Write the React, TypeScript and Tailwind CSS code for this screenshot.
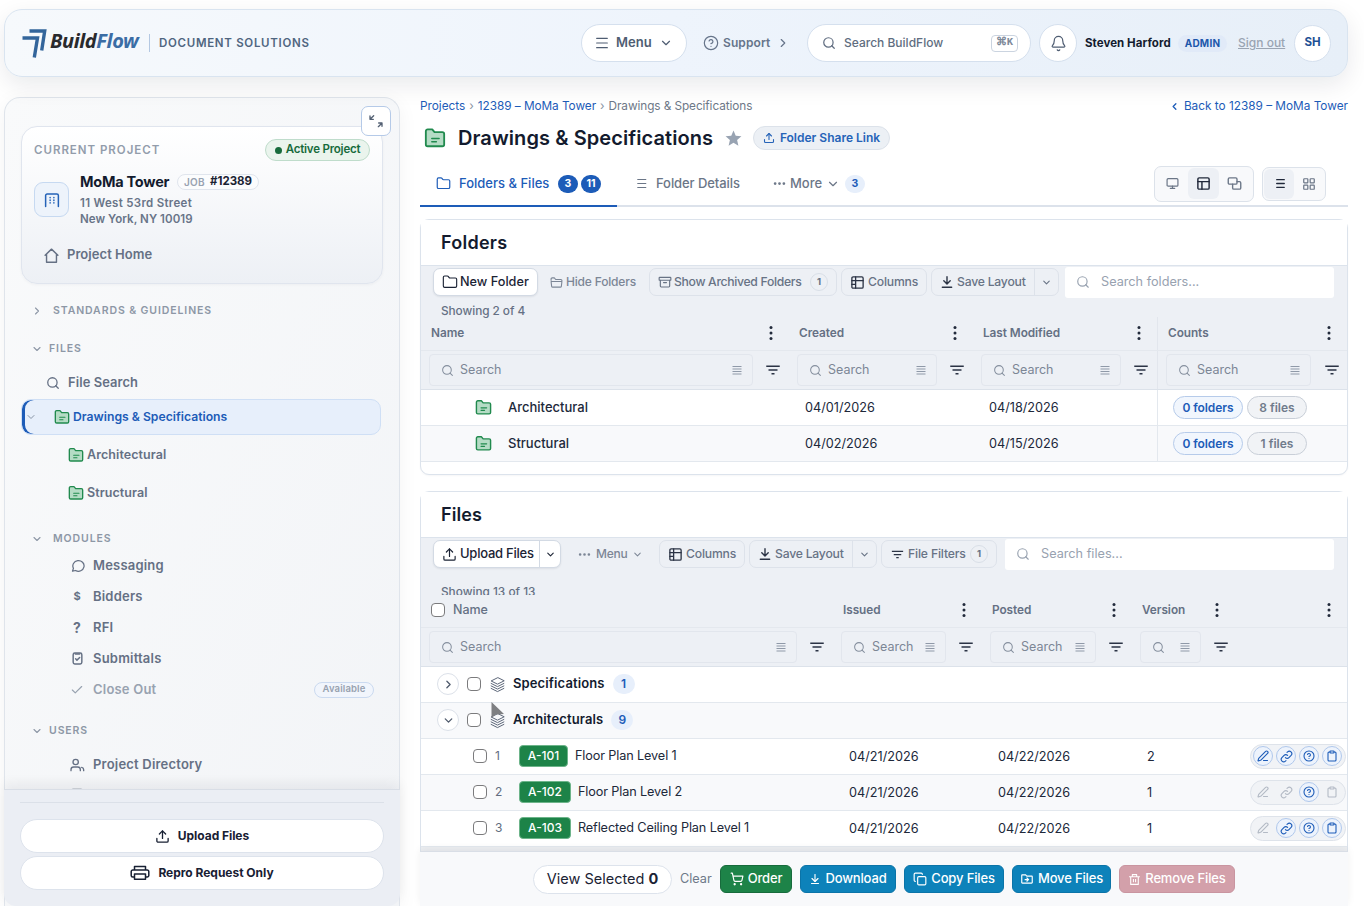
import type { ReactNode } from 'react';
import clsx from 'clsx';
import {
  ArrowDownToLine, Bell, Check, ChevronDown, ChevronLeft, ChevronRight, CircleHelp, Clipboard, Copy,
  Ellipsis, Folder, LayoutGrid, Link2, Menu, Monitor, PenLine, Search, ShoppingCart, Upload,
} from 'lucide-react';
import { MdFilterList, MdOutlineDriveFileMove, MdStar } from 'react-icons/md';
import { RiDeleteBinLine } from 'react-icons/ri';

function Icon({ size = 16, sw = 2, className, children }: { size?: number; sw?: number; className?: string; children: ReactNode }) {
  return (
    <svg width={size} height={size} viewBox="0 0 24 24" fill="none" stroke="currentColor" strokeWidth={sw}
      strokeLinecap="round" strokeLinejoin="round" className={clsx('shrink-0', className)}>
      {children}
    </svg>
  );
}

function GreenFolder({ size = 18 }: { size?: number }) {
  return (
    <Icon size={size} sw={2} className="text-[#218a4e]">
      <path d="M2 4.500A2 2 0 0 1 4 2.500h5l2.500 3H20a2 2 0 0 1 2 2V19a2 2 0 0 1-2 2H4a2 2 0 0 1-2-2z" fill="#b5dcc5" />
      <path d="M8.500 12.500h8M8.500 16h5" strokeWidth="1.600" />
    </Icon>
  );
}

function ColumnsIcon() {
  return (
    <Icon size={15} sw={2.1} className="text-[#2b3345]">
      <rect x="3" y="3" width="18" height="18" rx="2" />
      <path d="M3 9h18M9 3v18M3 15h6" />
    </Icon>
  );
}

function LayersIcon() {
  return (
    <Icon size={17} sw={1.4} className="text-[#5b6577]">
      <path d="M12 2.500 3 7l9 4.500L21 7z" />
      <path d="m3 10.500 9 4.500 9-4.500M3 14l9 4.500 9-4.500M3 17.500l9 4.500 9-4.500" />
    </Icon>
  );
}

function Kebab({ className }: { className?: string }) {
  return (
    <svg width="4" height="16" viewBox="0 0 4 16" fill="#222a3b" className={clsx('shrink-0', className)}>
      <circle cx="2" cy="2.500" r="1.500" />
      <circle cx="2" cy="8" r="1.500" />
      <circle cx="2" cy="13.500" r="1.500" />
    </svg>
  );
}

function Lines() {
  return (
    <svg width="10" height="10" viewBox="0 0 10 10" stroke="#8f99a8" strokeWidth="1" className="shrink-0">
      <path d="M0.500 1.500h9M0.500 4h9M0.500 6.500h9M0.500 9h9" />
    </svg>
  );
}

function Checkbox() {
  return <span className="size-[14px] shrink-0 rounded-[4px] border-[1.5px] border-[#7b7b7d] bg-white" />;
}

function Header() {
  return (
    <header className="relative z-10 mb-5 flex h-[68px] shrink-0 items-center rounded-[18px] border border-[#d9e4f0] bg-linear-to-r from-[#f6f9fc] via-[#eef4fc] to-[#e7eff8] pl-[17px] shadow-[0_8px_24px_rgba(15,23,42,0.09)]">
      <svg width="26" height="30" viewBox="0 0 26 30" fill="none" stroke="#33659b" strokeWidth="3.4" className="mt-[2px] shrink-0">
        <path d="M7.500 2H22.700L19.700 21.500" />
        <path d="M0.500 9H15.500L12.300 28.500" />
      </svg>
      <span className="-mt-[4px] ml-[2px] w-[92px] whitespace-nowrap font-['Noto_Sans'] text-[20px] font-bold italic leading-none tracking-[-0.4px] text-[#292a2d]">
        Build<span className="text-[#3b6da5]">Flow</span>
      </span>
      <span className="ml-[7px] h-[18px] w-px bg-[#b4c8e2]" />
      <span className="ml-[9px] w-[423px] pt-px text-[11.5px] font-semibold tracking-[0.7px] text-[#4f6580]">DOCUMENT SOLUTIONS</span>
      <button className="-ml-px flex h-[38px] w-[106px] items-center rounded-full border border-[#d5e0ee] bg-white pl-3 text-[#4f5d72]">
        <Menu size={16} strokeWidth={1.8} />
        <span className="ml-[6px] w-[43px] text-left text-[13px] font-semibold">Menu</span>
        <ChevronDown size={14} />
      </button>
      <div className="ml-4 flex w-[104px] items-center text-[#66748a]">
        <CircleHelp size={16} strokeWidth={1.8} />
        <span className="ml-[4px] w-[53px] text-[12px] font-semibold tracking-[0.1px]">Support</span>
        <ChevronRight size={14} />
      </div>
      <div className="flex h-[38px] w-[224px] items-center rounded-full border border-[#d5e0ee] bg-white pl-[14px] text-[#606d80]">
        <Search size={14} strokeWidth={2.1} />
        <span className="ml-[8px] w-[147px] text-[12px] font-medium">Search BuildFlow</span>
        <kbd className="flex h-[17px] w-[27px] items-center justify-center rounded-[4px] border border-[#cbd4e0] font-['Liberation_Mono'] text-[10.500px] font-bold tracking-[-0.500px] text-[#7d8898]">⌘K</kbd>
      </div>
      <span className="ml-2 flex size-[38px] items-center justify-center rounded-full border border-[#d5e0ee] bg-white text-[#4f5d72]">
        <Bell size={17} strokeWidth={1.7} />
      </span>
      <span className="ml-2 w-[93px] whitespace-nowrap pt-px text-[11.500px] font-bold tracking-[0.060px] text-[#131b2e]">Steven Harford</span>
      <span className="flex h-[17px] w-[49px] items-center justify-center rounded-full bg-[#e1eaf8] text-[10px] font-bold tracking-[0.200px] text-[#1d57ab]">ADMIN</span>
      <span className="ml-[11px] w-[56px] text-[12px] font-medium text-[#9aa4b2] underline">Sign out</span>
      <span className="flex size-[37px] items-center justify-center rounded-full border border-[#d5e0ee] bg-white text-[11.500px] font-bold text-[#1d4f94]">SH</span>
    </header>
  );
}

function SectionLabel({ open, wide, className, children }: { open?: boolean; wide?: boolean; className: string; children: string }) {
  return (
    <div className={clsx('flex items-center pl-[26px] text-[#8d97a6]', className)}>
      {open ? <ChevronDown size={12} strokeWidth={2.2} /> : <ChevronRight size={12} strokeWidth={2.2} />}
      <span className={clsx('text-[10.500px] font-semibold tracking-[0.900px]', wide ? 'ml-[10px]' : 'ml-[6px]')}>{children}</span>
    </div>
  );
}

function ModuleRow({ icon, label, muted, badge }: { icon: ReactNode; label?: string; muted?: boolean; badge?: string }) {
  return (
    <div className={clsx('flex h-[31px] items-center pl-[64px]', muted ? 'text-[#98a2b0]' : 'text-[#657084]')}>
      <span className="flex w-4 justify-center">{icon}</span>
      {label && <span className="ml-[8px] text-[13px] font-semibold tracking-[0.200px]">{label}</span>}
      {badge && (
        <span className="ml-auto mr-[25px] flex h-[16px] w-[60px] items-center justify-center rounded-full border border-[#cbdaf0] bg-[#f1f5fc] text-[9.500px] font-semibold tracking-[0.150px]">{badge}</span>
      )}
    </div>
  );
}

function Sidebar() {
  return (
    <aside className="relative flex w-[396px] shrink-0 flex-col rounded-t-[16px] border border-b-0 border-[#dfe4eb] bg-linear-to-br from-[#f9fafb] to-[#f2f4f7] shadow-[0_4px_20px_rgba(15,23,42,0.05)]">
      <button className="absolute right-[8px] top-[8px] z-10 flex size-[30px] items-center justify-center rounded-[7px] border border-[#b5cae8] bg-white text-[#536073]">
        <Icon size={16} sw={2}>
          <path d="M8.500 4 3 9.500M3 4.500v5h5" />
          <path d="M15.500 20.500 21 15M16 15h5v5" />
        </Icon>
      </button>
      <div className="min-h-0 grow overflow-hidden">
        <div className="ml-4 mt-[28px] h-[158px] w-[362px] rounded-[16px] border border-[#e0e5ee] bg-linear-to-b from-white to-[#edf0f5] shadow-[0_1px_3px_rgba(15,23,42,0.04)]">
          <div className="mt-3 flex h-[22px] items-center justify-between pl-3 pr-[12px]">
            <span className="pt-px text-[11.5px] font-semibold tracking-[0.980px] text-[#929cab]">CURRENT PROJECT</span>
            <span className="flex h-[22px] w-[105px] items-center justify-center gap-1 rounded-full border border-[#bfdccb] bg-[#eaf4ed] text-[11.500px] font-semibold tracking-[-0.200px] text-[#176b3c]">
              <span className="size-[7px] rounded-full bg-[#176b3c]" />
              Active Project
            </span>
          </div>
          <div className="mt-[10px] flex pl-3">
            <span className="mt-[11px] flex size-[35px] items-center justify-center rounded-[9px] border border-[#c6d9f1] bg-[#edf3fb] text-[#2563b8]">
              <Icon size={18} sw={2}>
                <path d="M3.500 20.500V6a2 2 0 0 1 2-2h13a2 2 0 0 1 2 2v14.500" />
                <path d="M9.500 8.500v.5M9.500 12v.5M9.500 15.500v.5M14.500 8.500v.5M14.500 12v.5M14.500 15.500v.5" />
              </Icon>
            </span>
            <div className="ml-[11px] text-[#687488]">
              <div className="flex h-[22px] items-center">
                <span className="w-[97px] text-[14.500px] font-bold tracking-[-0.250px] text-[#131b2e]">MoMa Tower</span>
                <span className="flex h-[16px] w-[82px] items-center justify-center gap-[5px] rounded-full border border-[#e0e5ed] bg-[#fbfcfd] text-[11.500px] font-bold text-[#1b2334]">
                  <span className="text-[10px] font-semibold tracking-[0.300px] text-[#98a2b1]">JOB</span>#12389
                </span>
              </div>
              <div className="mt-[2px] text-[11.500px] font-semibold leading-[16px]">
                <div className="tracking-[0.300px]">11 West 53rd Street</div>
                <div className="tracking-[0.050px]">New York, NY 10019</div>
              </div>
            </div>
          </div>
          <div className="mt-[18px] flex h-[20px] items-center pl-[21px] text-[#657084]">
            <Icon size={17} sw={2}>
              <path d="M3 11.500 12 3l9 8.500M5 9.700V21.500h14V9.700" />
            </Icon>
            <span className="ml-[7px] text-[13px] font-semibold tracking-[0.050px]">Project Home</span>
          </div>
        </div>

        <SectionLabel wide className="mt-[9px] h-9">{'STANDARDS & GUIDELINES'}</SectionLabel>
        <SectionLabel open className="mt-[2px] h-9">FILES</SectionLabel>
        <div className="flex h-[31px] items-center pl-[41px] text-[#657084]">
          <Search size={14} strokeWidth={2.200} />
          <span className="ml-[8px] text-[12.900px] font-semibold tracking-[0.100px]">File Search</span>
        </div>
        <div className="ml-4 mt-px flex h-9 w-[360px] items-center rounded-[10px] border border-[#cfdff5] bg-[#e7effb] shadow-[inset_3px_0_0_#1d5cb8]">
          <ChevronDown size={12} strokeWidth={2} className="ml-[3px] text-[#8793a5]" />
          <span className="ml-[17px]"><GreenFolder size={16} /></span>
          <span className="ml-[3px] text-[12.200px] font-semibold text-[#1d5cb8]">{'Drawings & Specifications'}</span>
        </div>
        <div className="mt-[2px] space-y-[2px]">
          {['Architectural', 'Structural'].map(name => (
            <div key={name} className="flex h-9 items-center pl-[63px]">
              <GreenFolder size={16} />
              <span className="ml-[3px] text-[12.500px] font-semibold tracking-[0.080px] text-[#657084]">{name}</span>
            </div>
          ))}
        </div>

        <SectionLabel open wide className="mt-4 h-[23px]">MODULES</SectionLabel>
        <ModuleRow label="Messaging" icon={
          <Icon size={15}><path d="M4 21l1.500-4.500A9 8.500 0 1 1 9 20z" /></Icon>
        } />
        <ModuleRow label="Bidders" icon={<span className="text-[11px] font-bold">$</span>} />
        <ModuleRow label="RFI" icon={<span className="text-[14px] font-bold">?</span>} />
        <ModuleRow label="Submittals" icon={
          <Icon size={13} sw={2.700}><rect x="4" y="2" width="16" height="20" rx="3" /><path d="M8 3.500h8M8.500 12.500l2.500 2.500 5-5" /></Icon>
        } />
        <ModuleRow label="Close Out" muted badge="Available" icon={<Check size={14} />} />

        <SectionLabel open className="mt-[11px] h-[30px]">USERS</SectionLabel>
        <div className="mt-[3px]">
          <ModuleRow label="Project Directory" icon={
            <Icon size={16}><circle cx="10" cy="7.500" r="4" /><path d="M3 20.500v-1.500a4 4 0 0 1 4-4h6a4 4 0 0 1 4 4v1.500M19 15.500c2 .500 3 2 3 3.500v1.500" /></Icon>
          } />
          <ModuleRow icon={<Icon size={16}><rect x="4" y="2" width="16" height="19" rx="2" /></Icon>} />
        </div>
      </div>

      <div className="z-10 -mx-px h-[117px] shrink-0 rounded-b-[12px] border-t border-[#d9dee6] bg-[#ebeef4] px-4 shadow-[0_-6px_12px_rgba(15,23,42,0.06)]">
        <div className="mt-3 border-t border-[#dbe0e8]" />
        <button className="mt-[16px] flex h-[34px] w-full items-center justify-center gap-[8px] rounded-full border border-[#dde3ec] bg-white text-[12px] font-bold tracking-[-0.050px] text-[#182033]">
          <Upload size={15} strokeWidth={2.100} />
          Upload Files
        </button>
        <button className="mt-[3px] flex h-[34px] w-full items-center justify-center gap-[8px] rounded-full border border-[#dde3ec] bg-white text-[12px] font-bold tracking-[-0.020px] text-[#182033]">
          <svg width="20" height="16" viewBox="0 0 20 16" fill="none" stroke="currentColor" strokeWidth="1.500" strokeLinejoin="round" className="shrink-0">
            <path d="M4.500 5V1.500h11V5M4.500 12H2.700a1.500 1.500 0 0 1-1.500-1.500v-4A1.500 1.500 0 0 1 2.700 5h14.600a1.500 1.500 0 0 1 1.500 1.500v4a1.500 1.500 0 0 1-1.500 1.500h-1.800" />
            <path d="M4.500 9h11v5.200h-11z" />
          </svg>
          Repro Request Only
        </button>
      </div>
    </aside>
  );
}

function PageHeading() {
  return (
    <>
      <div className="flex h-[17px] items-end justify-between text-[11.800px] leading-4 text-[#1d5cb8]">
        <div className="flex items-center gap-[4px]">
          <span>Projects</span>
          <span className="text-[#8791a0]">›</span>
          <span className="tracking-[-0.050px]">12389 – MoMa Tower</span>
          <span className="text-[#8791a0]">›</span>
          <span className="tracking-[-0.080px] text-[#6e7888]">{'Drawings & Specifications'}</span>
        </div>
        <div className="flex items-center">
          <ChevronLeft size={11} strokeWidth={2.800} />
          <span className="ml-[4px]">Back to 12389 – MoMa Tower</span>
        </div>
      </div>
      <div className="mt-[8px] flex h-8 items-center pl-[4px]">
        <GreenFolder size={22} />
        <h1 className="ml-3 w-[266px] text-[20px] font-semibold tracking-[0.080px] text-[#131b2e]">{'Drawings & Specifications'}</h1>
        <MdStar size={19} className="text-[#98a3b2]" />
        <span className="ml-[10px] flex h-6 w-[137px] items-center justify-center gap-[5px] rounded-full border border-[#dce2ea] bg-[#ecf0f5] text-[12px] font-semibold text-[#2563b8]">
          <Upload size={12} strokeWidth={2.200} />
          Folder Share Link
        </span>
      </div>
      <div className="mt-[8px] flex h-[45px] items-center border-b-2 border-[#dce2eb] text-[13px] font-medium text-[#6b7687]">
        <div className="-mb-[2px] flex h-[45px] w-[197px] items-center border-b-2 border-[#1d5cb8] pl-4 text-[#1d5cb8]">
          <Folder size={15} strokeWidth={1.900} />
          <span className="ml-2 w-[99px]">{'Folders & Files'}</span>
          <span className="flex h-[18px] w-[20px] items-center justify-center rounded-full bg-[#1d5cb8] text-[10.500px] font-bold text-white">3</span>
          <span className="ml-[3px] flex h-[18px] w-[20px] items-center justify-center rounded-full bg-[#1d5cb8] text-[10.500px] font-bold text-white">11</span>
        </div>
        <Icon size={13} sw={2} className="ml-[18px]"><path d="M5 4.500h15M5 12h15M5 19.500h15" /></Icon>
        <span className="ml-[8px] w-[116px] tracking-[-0.080px]">Folder Details</span>
        <Ellipsis size={15} strokeWidth={2.400} />
        <span className="ml-[3px] w-[35px]">More</span>
        <ChevronDown size={14} className="ml-[1px]" />
        <span className="ml-[5px] flex h-[18px] w-[20px] items-center justify-center rounded-full bg-[#e7effb] text-[10.500px] font-bold text-[#1d5cb8]">3</span>
        <div className="ml-auto flex h-9 w-[100px] items-center rounded-[7px] border border-[#dce2ea] bg-[#f8f9fb] pl-[2px]">
          <span className="flex size-[31px] items-center justify-center"><Monitor size={13} strokeWidth={2.200} /></span>
          <span className="flex size-[31px] items-center justify-center rounded-[6px] bg-[#edf0f5] text-[#20283a]">
            <Icon size={15} sw={2.300}><rect x="3" y="3" width="18" height="18" rx="2" /><path d="M3 9h18M9.500 9v12" /></Icon>
          </span>
          <span className="flex size-[31px] items-center justify-center">
            <Icon size={15} sw={2.200}><rect x="2" y="3" width="14" height="10" rx="2" /><path d="M16 9h4a2 2 0 0 1 2 2v8a2 2 0 0 1-2 2h-9a2 2 0 0 1-2-2v-6" /></Icon>
          </span>
        </div>
        <div className="ml-[8px] mr-[22px] flex h-[34px] w-[64px] items-center rounded-[7px] border border-[#dce2ea] bg-[#f8f9fb] pl-[1px]">
          <span className="flex size-[30px] items-center justify-center rounded-[6px] bg-[#edf0f5] text-[#20283a]">
            <Icon size={13} sw={2.400} className="ml-[3px]"><path d="M5 5h14M5 12h14M5 19h14" /></Icon>
          </span>
          <span className="flex size-[30px] items-center justify-center"><LayoutGrid size={14} strokeWidth={2.100} /></span>
        </div>
      </div>
    </>
  );
}

const btn = 'flex h-7 shrink-0 items-center rounded-[7px] border border-[#dde2ea] text-[12.200px] font-medium text-[#687385]';

function SaveLayout() {
  return (
    <div className={clsx(btn, 'w-[128px] pl-2')}>
      <Icon size={14} sw={2.400} className="text-[#2b3345]"><path d="M12 3v12M6.500 10l5.500 5.500 5.500-5.500M4 21h16" /></Icon>
      <span className="ml-[3px] w-[77px] whitespace-nowrap tracking-[-0.220px]">Save Layout</span>
      <span className="flex h-full grow items-center justify-center border-l border-[#dde2ea]"><ChevronDown size={11} strokeWidth={2.400} /></span>
    </div>
  );
}

function SearchBox({ placeholder, className }: { placeholder: string; className: string }) {
  return (
    <div className={clsx('flex h-[31px] items-center rounded-[3px] bg-white pl-[11px] text-[#98a2b0]', className)}>
      <Search size={14} strokeWidth={2} />
      <span className="ml-[11px] text-[12.700px]">{placeholder}</span>
    </div>
  );
}

function CountDot({ n }: { n: number }) {
  return <span className="flex size-[18px] items-center justify-center rounded-full border border-[#d9dfe7] text-[9.500px] font-bold">{n}</span>;
}

function FilterInput({ wide = true, last }: { wide?: boolean; last?: boolean }) {
  return (
    <div className="flex h-[38px] items-center pl-2">
      <div className="flex h-[32px] grow items-center rounded-[4px] border border-[#e2e6ed] pl-[11px] pr-[10px] text-[#858f9e]">
        <Search size={13} strokeWidth={1.900} className="shrink-0" />
        {wide && <span className="ml-[6px] text-[12.500px] text-[#7c8695]">Search</span>}
        <span className="ml-auto"><Lines /></span>
      </div>
      <span className={clsx('flex justify-center text-[#2b3345]', last ? 'w-[36px] pl-[5px]' : wide ? 'w-[36px] pl-[3px]' : 'w-[34px] pl-[6px]')}>
        <MdFilterList size={18} />
      </span>
    </div>
  );
}

function ColumnHead({ label, checkbox, kebab = true }: { label: string; checkbox?: boolean; kebab?: boolean }) {
  return (
    <div className="flex h-8 items-center pl-[10px] pr-4">
      {checkbox && <span className="-mt-px flex"><Checkbox /></span>}
      <span className={clsx('tracking-[-0.050px] text-[#657084]', checkbox ? 'ml-2 text-[12.500px] font-medium' : 'pt-[2px] text-[11.800px] font-semibold')}>{label}</span>
      {kebab && <Kebab className="-mt-px ml-auto" />}
    </div>
  );
}

const folderCols = 'grid grid-cols-[368px_184px_184px_190px]';
const fileCols = 'grid grid-cols-[412px_149px_150px_103px_112px]';

const folders = [
  { name: 'Architectural', created: '04/01/2026', modified: '04/18/2026', files: 8 },
  { name: 'Structural', created: '04/02/2026', modified: '04/15/2026', files: 1 },
];

function FoldersCard() {
  return (
    <section className="mt-[12px] h-[256px] shrink-0 rounded-[9px] border border-[#dce3ec] bg-white shadow-[0_1px_2px_rgba(15,23,42,0.04)]">
      <div className="flex h-[46px] items-center border-b border-[#dce3ec] bg-white pl-5 text-[18px] font-semibold tracking-[0.250px] text-[#131b2e]">Folders</div>
      <div className="bg-[#edf0f5]">
        <div className="flex h-[32px] items-center pl-3">
          <div className="flex h-7 w-[105px] items-center rounded-[7px] border border-[#d3dae4] bg-white pl-[8px] text-[12.700px] font-medium text-[#1b2334] shadow-[0_1px_2px_rgba(15,23,42,0.08)]">
            <Folder size={16} strokeWidth={1.700} />
            <span className="ml-[2px] whitespace-nowrap">New Folder</span>
          </div>
          <div className="ml-3 flex w-[99px] items-center text-[12px] font-medium text-[#7c8696]">
            <Icon size={13} sw={2}><path d="M2 8V5.500a2 2 0 0 1 2-2h4l2.500 3H20a2 2 0 0 1 2 2V9M2 10h20l-1 9a2 2 0 0 1-2 1.500H5A2 2 0 0 1 3 19z" /></Icon>
            <span className="ml-[3px] whitespace-nowrap tracking-[-0.180px]">Hide Folders</span>
          </div>
          <div className={clsx(btn, 'w-[188px] pl-2')}>
            <Icon size={14}><rect x="2" y="4" width="20" height="5" rx="1" /><path d="M4 9v10a1.500 1.500 0 0 0 1.500 1.500h13A1.500 1.500 0 0 0 20 19V9M9.500 13h5" /></Icon>
            <span className="ml-[2px] w-[136px] whitespace-nowrap tracking-[-0.320px]">Show Archived Folders</span>
            <CountDot n={1} />
          </div>
          <div className={clsx(btn, 'ml-[4px] w-[86px] gap-[3px] pl-2 tracking-[-0.200px]')}><ColumnsIcon />Columns</div>
          <div className="ml-[4px]"><SaveLayout /></div>
          <SearchBox placeholder="Search folders..." className="ml-[6px] w-[269px]" />
        </div>
        <div className="h-[19px] pl-5 pt-[5px] text-[11.800px] font-medium leading-[16px] tracking-[-0.050px] text-[#657084]">Showing 2 of 4</div>
        <div className={clsx(folderCols, 'h-[34px] border-b border-[#e4e8ee]')}>
          <ColumnHead label="Name" />
          <ColumnHead label="Created" />
          <ColumnHead label="Last Modified" />
          <div className="border-l border-[#e2e6ed]"><ColumnHead label="Counts" /></div>
        </div>
        <div className={clsx(folderCols, 'border-b border-[#dce2ea]')}>
          <FilterInput />
          <FilterInput />
          <FilterInput />
          <div className="border-l border-[#e2e6ed]"><FilterInput last /></div>
        </div>
      </div>
      {folders.map((f, i) => (
        <div key={f.name} className={clsx(folderCols, 'h-9 items-center border-b border-[#e3e8ee] text-[13px] text-[#20283a]', i % 2 === 1 && 'bg-[#f8f9fb]')}>
          <div className="flex items-center pl-[54px]">
            <GreenFolder size={17} />
            <span className="ml-4 font-medium">{f.name}</span>
          </div>
          <div className="pl-4 text-[12.700px]">{f.created}</div>
          <div className="pl-4 text-[12.700px]">{f.modified}</div>
          <div className="flex h-full items-center gap-[4px] border-l border-[#e3e8ee] pl-[15px] text-[12px] font-semibold">
            <span className="flex h-[23px] w-[70px] items-center justify-center rounded-full border border-[#b6cbea] bg-[#f1f6fd] tracking-[-0.100px] text-[#1d5cb8]">0 folders</span>
            <span className="flex h-[23px] w-[60px] items-center justify-center rounded-full border border-[#c9cfd8] bg-[#f1f3f6] text-[#707b8b]">{f.files} files</span>
          </div>
        </div>
      ))}
    </section>
  );
}

function GroupRow({ name, count, open }: { name: string; count: number; open?: boolean }) {
  return (
    <div className={clsx('flex h-9 items-center border-b border-[#e3e8ee] pb-px pl-[16px]', open && 'bg-[#f8f9fb]')}>
      <span className="flex size-[22px] items-center justify-center rounded-full border border-[#dce1e9] bg-white text-[#4f5a6c]">
        {open ? <ChevronDown size={13} strokeWidth={2.400} /> : <ChevronRight size={13} strokeWidth={2.400} />}
      </span>
      <span className="ml-2 flex"><Checkbox /></span>
      <span className="ml-2"><LayersIcon /></span>
      <span className="ml-[7px] text-[13px] font-semibold tracking-[0.120px] text-[#131b2e]">{name}</span>
      <span className="ml-2 flex h-5 w-[22px] items-center justify-center rounded-full bg-[#e7effb] text-[12px] font-semibold text-[#1d5cb8]">{count}</span>
    </div>
  );
}

const actionIcons = [PenLine, Link2, CircleHelp, Clipboard];

const files = [
  { tag: 'A-101', name: 'Floor Plan Level 1', version: 2, actions: [true, true, true, true] },
  { tag: 'A-102', name: 'Floor Plan Level 2', version: 1, actions: [false, false, true, false] },
  { tag: 'A-103', name: 'Reflected Ceiling Plan Level 1', version: 1, actions: [false, true, true, true] },
];

function LinkIcon() {
  return (
    <Icon size={13} sw={2.100}>
      <path d="M10 14a4.500 4.500 0 0 0 6.500 0l4-4a4.600 4.600 0 0 0-6.500-6.500L13 4.500" />
      <path d="M14 10a4.500 4.500 0 0 0-6.500 0l-4 4a4.600 4.600 0 0 0 6.500 6.500l1-1" />
    </Icon>
  );
}

function FileRow({ index, file }: { index: number; file: (typeof files)[number] }) {
  return (
    <div className={clsx(fileCols, 'h-9 items-center border-b border-[#e3e8ee] text-[12.700px] text-[#20283a]', index % 2 === 1 && 'bg-[#f8f9fb]')}>
      <div className="flex items-center pb-px pl-[52px]">
        <Checkbox />
        <span className="ml-[8px] w-[24px] text-[12px] text-[#626d80]">{index + 1}</span>
        <span className={clsx('flex h-[22px] items-center justify-center rounded-[4px] border border-[#6db48a] bg-[#1d8348] text-[12px] font-medium text-white', index === 0 ? 'w-[49px]' : 'w-[52px]')}>{file.tag}</span>
        <span className="ml-[7px] whitespace-nowrap tracking-[-0.130px]">{file.name}</span>
      </div>
      <div className="pl-4">04/21/2026</div>
      <div className="pl-4">04/22/2026</div>
      <div className="pl-[15px]">{file.version}</div>
      <div className="flex justify-end pb-px pr-px">
        <div className="flex h-[25px] w-[96px] items-center gap-[3px] rounded-full border border-[#dee3ea] bg-[#f1f3f6] pl-[2px]">
          {actionIcons.map((A, i) => (
            <span key={i} className={clsx('flex size-5 shrink-0 items-center justify-center rounded-full border', file.actions[i] ? 'border-[#b0c8ec] bg-[#edf3fc] text-[#1d5cb8]' : 'border-transparent text-[#b3bac5]')}>
              {A === Link2 ? <LinkIcon /> : <A size={12} strokeWidth={2.200} />}
            </span>
          ))}
        </div>
      </div>
    </div>
  );
}

function FilesCard() {
  return (
    <section className="mt-4 shrink-0 rounded-t-[9px] border border-b-0 border-[#dce3ec] bg-white">
      <div className="flex h-[46px] items-center border-b border-[#dce3ec] bg-white pl-5 text-[18px] font-semibold tracking-[0.100px] text-[#131b2e]">Files</div>
      <div className="bg-[#edf0f5]">
        <div className="flex h-[32px] items-center pl-3">
          <div className="flex h-7 w-[128px] items-center rounded-[7px] border border-[#d3dae4] bg-white pl-[8px] text-[13px] font-medium text-[#1b2334] shadow-[0_1px_2px_rgba(15,23,42,0.08)]">
            <Upload size={15} strokeWidth={1.900} className="shrink-0" />
            <span className="ml-[3px] w-[79px] whitespace-nowrap tracking-[-0.250px]">Upload Files</span>
            <span className="flex h-full grow items-center justify-center border-l border-[#d3dae4]"><ChevronDown size={11} strokeWidth={2.400} /></span>
          </div>
          <div className="ml-4 flex w-[82px] items-center text-[12px] font-medium text-[#7c8696]">
            <Ellipsis size={15} strokeWidth={2.200} />
            <span className="ml-[4px] w-[36px] tracking-[-0.200px]">Menu</span>
            <ChevronDown size={11} strokeWidth={2.200} />
          </div>
          <div className={clsx(btn, 'w-[86px] gap-[3px] pl-2 tracking-[-0.200px]')}><ColumnsIcon />Columns</div>
          <div className="ml-[4px]"><SaveLayout /></div>
          <div className={clsx(btn, 'ml-[4px] w-[116px] pl-2')}>
            <MdFilterList size={15} className="shrink-0 text-[#2b3345]" />
            <span className="ml-[3px] w-[62px] whitespace-nowrap tracking-[-0.170px]">File Filters</span>
            <CountDot n={1} />
          </div>
          <SearchBox placeholder="Search files..." className="ml-[8px] w-[329px]" />
        </div>
        <div className="flex h-[25px] items-start overflow-hidden pl-5 pt-[14px] text-[11.800px] font-medium leading-[16px] text-[#657084]">Showing 13 of 13</div>
        <div className={clsx(fileCols, 'h-[33px] border-b border-[#e4e8ee] [&>div]:h-[30px]')}>
          <ColumnHead label="Name" checkbox kebab={false} />
          <ColumnHead label="Issued" />
          <ColumnHead label="Posted" />
          <ColumnHead label="Version" />
          <ColumnHead label="" />
        </div>
        <div className={clsx(fileCols, 'border-b border-[#dce2ea]')}>
          <FilterInput />
          <FilterInput />
          <FilterInput />
          <FilterInput wide={false} />
        </div>
      </div>
      <div className="relative">
        <GroupRow name="Specifications" count={1} />
        <GroupRow name="Architecturals" count={9} open />
        <svg width="13" height="18" viewBox="0 0 13 18" className="absolute left-[70px] top-[34px]">
          <path d="M0.500 1v15.500l4.500-3 8-0.500z" fill="#7e7f82" />
        </svg>
      </div>
      {files.map((f, i) => <FileRow key={f.tag} index={i} file={f} />)}
      <div className="h-[4px] bg-[#eceef1]" />
    </section>
  );
}

function Action({ icon, label, className }: { icon: ReactNode; label: string; className: string }) {
  return (
    <button className={clsx('flex h-7 shrink-0 items-center justify-center gap-[4px] whitespace-nowrap rounded-[6px] border text-[13px] font-medium tracking-[-0.150px] text-white', className)}>
      {icon}
      {label}
    </button>
  );
}

function BottomBar() {
  return (
    <div className="z-10 flex grow items-center justify-center gap-2 border-t border-[#d9dee6] bg-[#f8f9fb] shadow-[0_-2px_8px_rgba(15,23,42,0.06)]">
      <span className="flex h-[29px] w-[139px] shrink-0 items-center justify-center gap-[4px] rounded-full border border-[#dde3ec] bg-white text-[14.500px] text-[#1b2334]">
        View Selected <b>0</b>
      </span>
      <span className="w-8 text-[12.700px] text-[#6e7989]">Clear</span>
      <Action className="w-[72px] border-[#176b3c] bg-[#1d8348]" icon={<ShoppingCart size={14} />} label="Order" />
      <Action className="w-[96px] border-[#0b74a8] bg-[#0d82ba]" icon={<ArrowDownToLine size={12} strokeWidth={2.300} />} label="Download" />
      <Action className="w-[100px] border-[#0b74a8] bg-[#0d82ba]" icon={<Copy size={14} />} label="Copy Files" />
      <Action className="w-[99px] border-[#0b74a8] bg-[#0d82ba]" icon={<MdOutlineDriveFileMove size={14} />} label="Move Files" />
      <Action className="w-[116px] border-[#c995a0] bg-[#d3a0aa]" icon={<RiDeleteBinLine size={13} />} label="Remove Files" />
    </div>
  );
}

export default function App() {
  return (
    <div className="flex h-[906px] w-[1364px] flex-col overflow-hidden bg-white pl-[4px] pr-4 pt-[9px] font-['Inter','DejaVu_Sans',sans-serif]">
      <Header />
      <div className="flex min-h-0 grow gap-5">
        <Sidebar />
        <main className="flex w-[928px] shrink-0 flex-col">
          <PageHeading />
          <FoldersCard />
          <FilesCard />
          <BottomBar />
        </main>
      </div>
    </div>
  );
}
